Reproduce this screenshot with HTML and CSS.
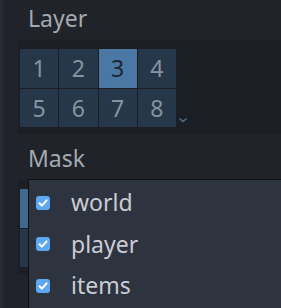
FILE: index.html
```html
<!DOCTYPE html>
<html lang="en">
<head>
  <meta charset="UTF-8">
  <meta name="viewport" content="width=device-width, initial-scale=1.0">
  <title>Layers</title>
  <link rel="stylesheet" href="styles.css">
</head>
<body>
  <div class="editor">
    <div class="edge"></div>

    <div class="inspector">
      <p class="prop-label">Layer</p>
      <div class="prop-panel">
        <div class="layer-grid">
          <div class="cell">1</div>
          <div class="cell">2</div>
          <div class="cell cell-on">3</div>
          <div class="cell">4</div>
          <div class="cell">5</div>
          <div class="cell">6</div>
          <div class="cell">7</div>
          <div class="cell">8</div>
        </div>
        <svg class="more-arrow" width="10" height="6" viewBox="0 0 10 6">
          <path d="M1.5 1.5 L5 4.5 L8.5 1.5" fill="none" stroke="#4f6b8a" stroke-width="1.6"/>
        </svg>
      </div>

      <p class="prop-label mask-label">Mask</p>
      <!-- grid sits under the popup, only its left edge shows -->
      <div class="prop-panel">
        <div class="layer-grid">
          <div class="cell cell-on cell-dim"></div>
          <div class="cell"></div>
          <div class="cell"></div>
          <div class="cell"></div>
          <div class="cell"></div>
          <div class="cell"></div>
          <div class="cell"></div>
          <div class="cell"></div>
        </div>
      </div>
    </div>

    <!-- named layers popup, opened over the mask grid -->
    <div class="popup">
      <div class="popup-item">
        <span class="check"><svg width="14" height="14" viewBox="0 0 14 14"><path d="M3.5 7.3 L5.9 9.6 L10.6 4.4" fill="none" stroke="#fff" stroke-width="2" stroke-linecap="round" stroke-linejoin="round"/></svg></span>
        <span class="item-name">world</span>
      </div>
      <div class="popup-item">
        <span class="check"><svg width="14" height="14" viewBox="0 0 14 14"><path d="M3.5 7.3 L5.9 9.6 L10.6 4.4" fill="none" stroke="#fff" stroke-width="2" stroke-linecap="round" stroke-linejoin="round"/></svg></span>
        <span class="item-name">player</span>
      </div>
      <div class="popup-item">
        <span class="check"><svg width="14" height="14" viewBox="0 0 14 14"><path d="M3.5 7.3 L5.9 9.6 L10.6 4.4" fill="none" stroke="#fff" stroke-width="2" stroke-linecap="round" stroke-linejoin="round"/></svg></span>
        <span class="item-name">items</span>
      </div>
    </div>
  </div>
</body>
</html>
```

FILE: styles.css
```css
body {
  margin: 0;
  background-color: #202329;
  font-family: 'Noto Sans', 'Open Sans', sans-serif;
  overflow: hidden;
}

.editor {
  position: relative;
  display: flex;
  width: 281px;
  height: 308px;
}

.edge {
  width: 3px;
  background-color: #262a33;
}

.inspector {
  flex: 1;
  padding-left: 15px;
}

.prop-label {
  margin: 0;
  padding: 0 0 4px 10px;
  font-size: 23px;
  line-height: 36px;
  color: #a4a9b0;
}

.mask-label {
  padding-top: 6px;
}

.prop-panel {
  display: flex;
  align-items: flex-end;
  padding: 9px 0 7px 2px;
  background-color: #1b1e24;
}

.layer-grid {
  display: grid;
  grid-template-columns: repeat(4, 1fr);
  grid-auto-rows: 38.5px;
  gap: 1px;
  width: 156px;
  background-color: #1b1e24;
}

.cell {
  display: flex;
  justify-content: center;
  align-items: center;
  background-color: #26374a;
  color: #8793a0;
  font-size: 23px;
}

.cell-on {
  background-color: #4a77a4;
  color: #1b2633;
}

.cell-dim {
  background-color: #41688f;
}

.more-arrow {
  margin: 0 0 4px 2px;
}

.popup {
  position: absolute;
  left: 28px;
  top: 179px;
  right: -1px;
  bottom: -1px;
  padding-top: 2px;
  border: 1px solid #0e1013;
  background-color: #2e3340;
}

.popup-item {
  display: flex;
  align-items: center;
  height: 41.5px;
  padding-left: 7px;
}

.check {
  display: flex;
  width: 14px;
  height: 14px;
  border-radius: 3px;
  background-color: #5ea8f2;
}

.item-name {
  margin-left: 21px;
  font-size: 23px;
  line-height: 41px;
  color: #c9cdd3;
}
```
